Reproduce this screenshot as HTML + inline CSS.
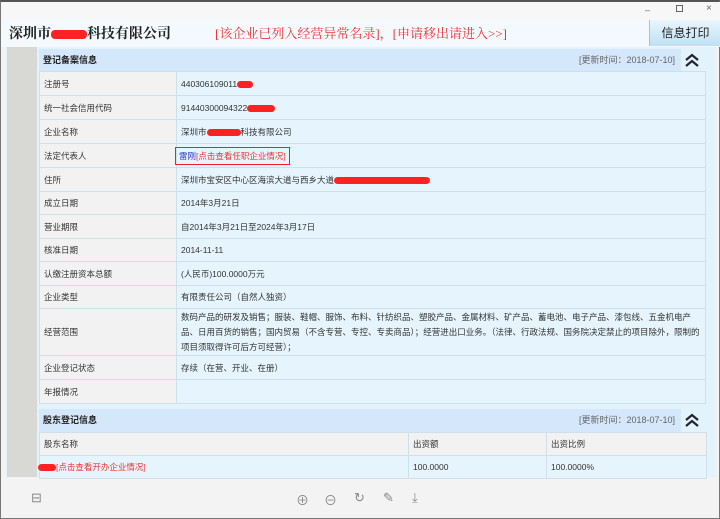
<!DOCTYPE html><html><head><meta charset="utf-8"><style>
*{margin:0;padding:0;box-sizing:border-box}
body{width:720px;height:519px;overflow:hidden;background:#f3f3f3;font-family:"Liberation Sans","Noto Sans CJK SC",sans-serif;font-size:9px;color:#333;position:relative;border:1px solid #777;border-top:2px solid #555}
.abs{position:absolute}
.hdr{left:0;top:17px;width:720px;height:28px;background:#f4f9fd}
.title{left:8px;top:21px;font-family:"Liberation Serif","Noto Serif CJK SC",serif;font-size:14px;font-weight:bold;color:#222}
.warn{left:214px;top:21px;font-family:"Liberation Serif","Noto Serif CJK SC",serif;font-size:13px;color:#e33}
.btn{left:648px;top:18px;width:72px;height:26px;background:linear-gradient(#eaf5fd,#bfe0f5);border-left:1px solid #9cc;font-size:12px;color:#222;text-align:center;line-height:26px}
.main{left:5px;top:45px;width:710px;height:430px;background:#e2f3fc}
.strip{left:6px;top:45px;width:30px;height:430px;background:#d8d8d4}
.sec{left:38px;height:23px;width:642px;background:#d5e7fb;font-weight:bold;font-size:9px;line-height:23px;padding-left:4px;color:#222}
.sec span{position:absolute;right:6px;font-weight:normal;color:#666}
.chev{left:681px;width:20px;text-align:center}
table{position:absolute;left:38px;width:667px;border-collapse:collapse}
td{border:1px solid #cfe0ea;padding:0 4px;height:23px;vertical-align:middle;font-size:8.5px}
tr.t td{height:24px}
td.l{background:#f2f2f2;width:137px}
td.v{background:#e6f5fd}
.red{color:#e33}
.blot{display:inline-block;background:#f22;border-radius:4px;height:7px;vertical-align:middle}
.ic{top:488px;font-size:13px;color:#888}
</style></head><body>
<div class="abs" style="left:0;top:0;width:720px;height:17px;background:#f7f7f7"></div>
<div class="abs" style="left:644px;top:3px;color:#666;font-size:9px">–</div>
<div class="abs" style="left:675px;top:3px;width:7px;height:7px;border:1px solid #666"></div>
<div class="abs" style="left:705px;top:1px;color:#666;font-size:10px">×</div>
<div class="abs hdr"></div>
<div class="abs title">深圳市<span class="blot" style="width:36px;height:9px"></span>科技有限公司</div>
<div class="abs warn">[该企业已列入经营异常名录]，[申请移出请进入&gt;&gt;]</div>
<div class="abs btn">信息打印</div>
<div class="abs main"></div>
<div class="abs strip"></div>
<div class="abs sec" style="top:47px">登记备案信息<span>[更新时间：2018-07-10]</span></div>
<svg class="abs chev" style="top:50px" width="20" height="16" viewBox="0 0 20 16"><path d="M4 8L10 3L16 8M4 14L10 9L16 14" fill="none" stroke="#223" stroke-width="2.2"/></svg>
<table style="top:69px">
<tr class="t"><td class="l">注册号</td><td class="v">440306109011<span class="blot" style="width:16px"></span></td></tr>
<tr class="t"><td class="l">统一社会信用代码</td><td class="v">91440300094322<span class="blot" style="width:28px"></span></td></tr>
<tr class="t"><td class="l">企业名称</td><td class="v">深圳市<span class="blot" style="width:34px"></span>科技有限公司</td></tr>
<tr class="t"><td class="l">法定代表人</td><td class="v"><span style="display:inline-block;border:1.5px solid #e22;padding:2px 3px;margin-left:-6px"><span style="color:#33c">雷刚</span><span class="red">[点击查看任职企业情况]</span></span></td></tr>
<tr class="t"><td class="l">住所</td><td class="v">深圳市宝安区中心区海滨大道与西乡大道<span class="blot" style="width:96px"></span></td></tr>
<tr><td class="l">成立日期</td><td class="v">2014年3月21日</td></tr>
<tr class="t"><td class="l">营业期限</td><td class="v">自2014年3月21日至2024年3月17日</td></tr>
<tr><td class="l">核准日期</td><td class="v">2014-11-11</td></tr>
<tr class="t"><td class="l">认缴注册资本总额</td><td class="v">(人民币)100.0000万元</td></tr>
<tr><td class="l">企业类型</td><td class="v">有限责任公司（自然人独资）</td></tr>
<tr><td class="l" style="height:47px">经营范围</td><td class="v" style="line-height:15px">数码产品的研发及销售；服装、鞋帽、服饰、布料、针纺织品、塑胶产品、金属材料、矿产品、蓄电池、电子产品、漆包线、五金机电产品、日用百货的销售；国内贸易（不含专营、专控、专卖商品）；经营进出口业务。（法律、行政法规、国务院决定禁止的项目除外，限制的项目须取得许可后方可经营）；</td></tr>
<tr class="t"><td class="l">企业登记状态</td><td class="v">存续（在营、开业、在册）</td></tr>
<tr class="t"><td class="l">年报情况</td><td class="v"></td></tr>
</table>
<div class="abs sec" style="top:407px">股东登记信息<span>[更新时间：2018-07-10]</span></div>
<svg class="abs chev" style="top:410px" width="20" height="16" viewBox="0 0 20 16"><path d="M4 8L10 3L16 8M4 14L10 9L16 14" fill="none" stroke="#223" stroke-width="2.2"/></svg>
<table style="top:430px;table-layout:fixed">
<tr><td class="l" style="width:369px;height:21px">股东名称</td><td class="l" style="width:138px">出资额</td><td class="l" style="width:160px">出资比例</td></tr>
<tr><td class="v" style="height:22px"><span class="blot" style="width:18px;margin-left:-6px"></span><span class="red">[点击查看开办企业情况]</span></td><td class="v">100.0000</td><td class="v">100.0000%</td></tr>
</table>
<div class="abs ic" style="left:30px">⊟</div>
<div class="abs ic" style="left:295px">⊕</div>
<div class="abs ic" style="left:323px">⊖</div>
<div class="abs ic" style="left:353px">↻</div>
<div class="abs ic" style="left:382px">✎</div>
<div class="abs ic" style="left:411px">⤓</div>
</body></html>
